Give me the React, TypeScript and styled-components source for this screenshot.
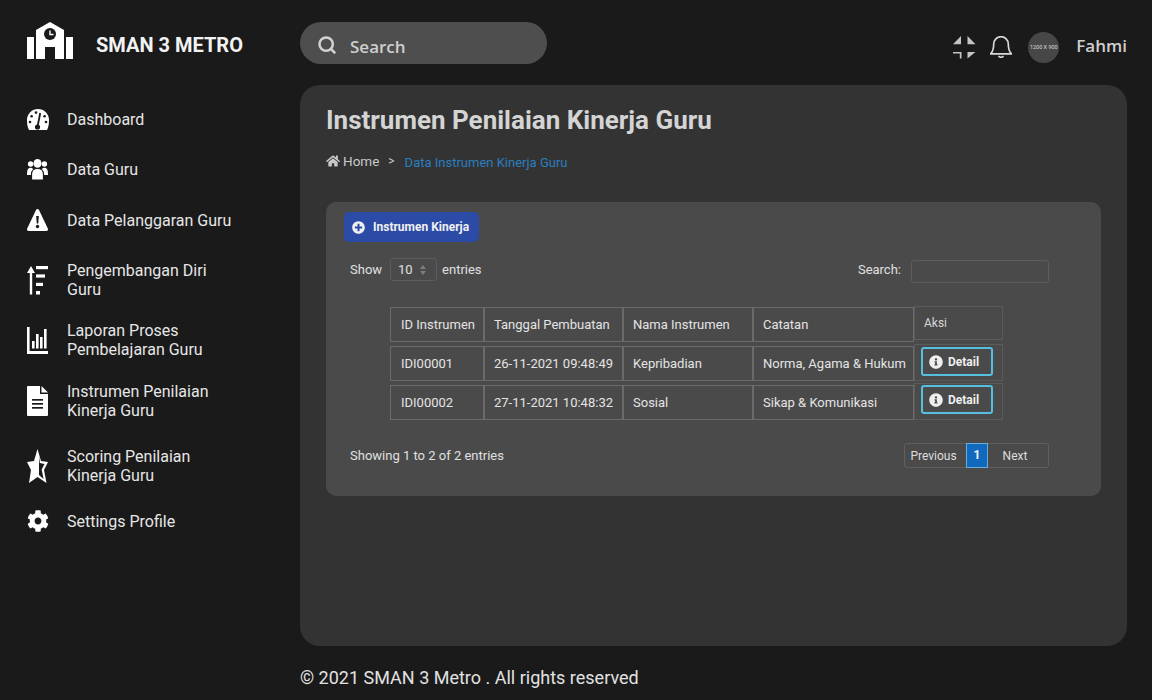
import React from "react";
import styled, { createGlobalStyle } from "styled-components";
import { FaCog, FaHome, FaPlusCircle, FaInfoCircle } from "react-icons/fa";
import { Search as SearchIcon } from "lucide-react";

const Global = createGlobalStyle`
  html, body { margin: 0; padding: 0; background: #1a1a1a; }
  body { font-family: Roboto, "Liberation Sans", sans-serif; }
  * { box-sizing: border-box; }
`;

const Page = styled.div`
  display: flex; width: 1152px; height: 700px; overflow: hidden; background: #1a1a1a;
`;
const Sidebar = styled.aside`
  width: 300px; flex: none; padding: 22px 0 0 27px;
`;
const Brand = styled.div`
  display: flex; align-items: center; gap: 23px; height: 37px; margin-bottom: 35px;
`;
const BrandName = styled.div`
  font-size: 20px; font-weight: 700; color: #f2f2f2; margin-top: 8px;
`;
const Nav = styled.nav`
  display: flex; flex-direction: column;
`;
const NavItem = styled.div<{ $h: number }>`
  display: flex; align-items: center; height: ${p => p.$h}px; color: #e6e6e6;
  font-size: 16px; line-height: 19px;
`;
const NavIcon = styled.span`
  width: 40px; flex: none; display: flex; align-items: center; color: #fff;
`;
const Main = styled.div`
  flex: 1; display: flex; flex-direction: column; padding-right: 25px;
`;
const Header = styled.header`
  height: 85px; display: flex; align-items: flex-start; justify-content: space-between; padding-top: 22px;
`;
const SearchBox = styled.div`
  width: 247px; height: 42px; border-radius: 21px; background: #4e4e4e; display: flex; align-items: center;
  padding: 4px 0 0 17px; gap: 13px; color: #d2d2d2;
`;
const SearchLabel = styled.span`
  font-family: "Open Sans", sans-serif; font-weight: 600; font-size: 17px; position: relative; top: 1px; color: #cfcfcf;
`;
const HeaderRight = styled.div`
  display: flex; align-items: center; height: 46px; color: #d9d9d9;
`;
const HeaderGlyph = styled.span`
  display: flex; margin-top: 4px; margin-left: 14px;
`;
const Avatar = styled.div`
  width: 31px; height: 31px; border-radius: 50%; background: #474747; color: #dcdcdc; margin: 4px 0 0 16px;
  font-size: 5.5px; display: flex; align-items: center; justify-content: center; white-space: nowrap;
`;
const UserName = styled.span`
  margin-left: 17px; font-family: "Open Sans", sans-serif; font-size: 17px; font-weight: 600; color: #cfcfcf;
`;
const ContentCard = styled.main`
  height: 561px; background: #333; border-radius: 20px; padding: 20px 26px 0;
`;
const Title = styled.h1`
  margin: 0; font-size: 26px; font-weight: 700; color: #d4d4d4; line-height: 30px;
`;
const Crumbs = styled.div`
  display: flex; align-items: center; margin-top: 16px; height: 20px; font-size: 13.5px; color: #c9c9c9;
`;
const CrumbHome = styled.span`
  margin-left: 3px;
`;
const CrumbSep = styled.span`
  margin: 0 10px 0 9px; font-size: 12px;
`;
const CrumbLink = styled.span`
  color: #2a7fc0; font-size: 13px; position: relative; top: 1px;
`;
const Panel = styled.section`
  margin-top: 31px; height: 294px; background: #4a4a4a; border-radius: 10px; padding: 10px 52px 0 18px;
  color: #e0e0e0; font-size: 13px;
`;
const AddButton = styled.button`
  display: flex; align-items: center; gap: 8px; height: 30px; width: 135px; padding: 0 8px; border: 0;
  border-radius: 5px; background: #2b4ba6; color: #f0f0f0; font: 700 12px Roboto, sans-serif;
`;
const Controls = styled.div`
  display: flex; justify-content: space-between; align-items: center; margin: 16px 0 0; height: 23px; padding-left: 6px;
`;
const Inline = styled.div`
  display: flex; align-items: center; gap: 7px;
`;
const SelectBox = styled.div`
  width: 47px; height: 23px; border: 1px solid #5c5c5c; border-radius: 3px; display: flex; align-items: center;
  justify-content: space-between; padding: 0 10px 0 7px; font-size: 13px; margin: 0 -2px 0 1px;
`;
const SearchInput = styled.div`
  width: 138px; height: 23px; border: 1px solid #5c5c5c; border-radius: 3px; margin: 4px 0 0 3px;
`;
const TableWrap = styled.div`
  display: flex; margin: 25px 0 0 46px; align-items: flex-start;
`;
const DataGrid = styled.div`
  display: grid; grid-template-columns: 94px 139px 130px 161px; grid-auto-rows: 35px; row-gap: 4px; margin-top: 1px;
`;
const Cell = styled.div`
  border: 1px solid #6b6b6b; padding: 0 5px 0 9px; display: flex; align-items: center; color: #e4e4e4; font-size: 13px; white-space: nowrap;
  &:nth-child(4n + 1) { padding-left: 10px; }
`;
const ActionColumn = styled.div`
  display: flex; flex-direction: column; width: 89px; color: #d6d6d6;
`;
const ActionCell = styled.div<{ $h: number; $mt: number; $pt: number }>`
  height: ${p => p.$h}px; margin-top: ${p => p.$mt}px; border: 1px solid #5b5b5b; padding: ${p => p.$pt}px 0 0 6px;
  display: flex; align-items: flex-start; font-size: 12px;
`;
const AksiLabel = styled.span`
  padding: 9px 0 0 3px;
`;
const DetailButton = styled.div`
  width: 72px; height: 29px; border: 2px solid #56bfe0; border-radius: 3px; display: flex; align-items: center;
  padding-left: 6px; gap: 5px; color: #efefef; font-size: 12px; font-weight: 700;
`;
const Foot = styled.div`
  display: flex; justify-content: space-between; align-items: center; margin-top: 23px; padding-left: 6px; height: 25px;
`;
const Pager = styled.div`
  display: flex; height: 25px; border: 1px solid #5f5f5f; border-radius: 3px; font-size: 12px;
`;
const PageBtn = styled.div<{ $w: number; $pr: number }>`
  width: ${p => p.$w}px; padding-right: ${p => p.$pr}px; display: flex; align-items: center; justify-content: center; color: #dedede;
`;
const PageCurrent = styled.div`
  width: 22px; margin: -1px 0; background: #1169bd; border: 1px solid #6aaedb; color: #f4f4f4; font-weight: 700;
  display: flex; align-items: center; justify-content: center; padding-bottom: 2px;
`;
const Footer = styled.footer`
  margin-top: 21px; font-size: 18px; color: #e2e2e2; line-height: 22px;
`;

const DARK = "#1a1a1a";

const SchoolIcon = () => (
  <svg width="46" height="37" viewBox="0 0 46 37" fill="#fff">
    <path d="M23 0 L37 8 V37 H28 V25 H18 V37 H9 V8 Z" />
    <circle cx="23" cy="12" r="6" fill={DARK} />
    <path d="M23 8.5 V12.5 H26.5" stroke="#fff" strokeWidth="1.4" fill="none" />
    <rect x="0" y="15" width="7" height="22" />
    <rect x="39" y="15" width="7" height="22" />
  </svg>
);
const DashboardIcon = () => (
  <svg width="22" height="21" viewBox="0 0 22 21" fill="#fff">
    <path d="M11 0 A11 11 0 0 1 22 11 C22 15 21.5 18 20 21 H2 C0.5 18 0 15 0 11 A11 11 0 0 1 11 0 Z" />
    <g fill={DARK}>
      <circle cx="9" cy="3.6" r="1.3" />
      <circle cx="4.6" cy="7.2" r="1.3" />
      <circle cx="3" cy="13" r="1.3" />
      <circle cx="17.6" cy="7.2" r="1.3" />
      <circle cx="19" cy="13" r="1.3" />
    </g>
    <path d="M10.5 18 L13.2 4" stroke={DARK} strokeWidth="1.8" />
    <circle cx="10.5" cy="18" r="2.6" fill={DARK} />
  </svg>
);
const UsersIcon = () => (
  <svg width="21" height="21" viewBox="0 0 21 21" fill="#fff">
    <circle cx="3.6" cy="5" r="2.7" />
    <circle cx="17.4" cy="5" r="2.7" />
    <path d="M0 14.5 Q0 8.8 3.6 8.8 Q7 8.8 7 14.5 V16 H0 Z" />
    <path d="M14 14.5 Q14 8.8 17.4 8.8 Q21 8.8 21 14.5 V16 H14 Z" />
    <ellipse cx="10.5" cy="4.4" rx="4" ry="4.4" />
    <path d="M4.5 21 V15.5 Q4.5 9.5 10.5 9.5 Q16.5 9.5 16.5 15.5 V21 Z" stroke={DARK} strokeWidth="1.2" />
  </svg>
);
const WarningIcon = () => (
  <svg width="21" height="22" viewBox="0 0 21 22" fill="#fff">
    <path d="M10.5 0 Q11.5 0 12 1 L20.8 19.5 Q21.5 22 19 22 H2 Q-0.5 22 0.2 19.5 L9 1 Q9.5 0 10.5 0 Z" />
    <path d="M9.2 7 H11.8 L11.3 14.5 H9.7 Z" fill={DARK} />
    <circle cx="10.5" cy="17.5" r="1.7" fill={DARK} />
  </svg>
);
const SortIcon = () => (
  <svg width="21" height="29" viewBox="0 0 21 29" fill="#fff">
    <path d="M4 0 L8 7 H5.2 V28.5 H2.8 V7 H0 Z" />
    <rect x="9" y="0" width="12" height="3.2" />
    <rect x="9" y="8.4" width="9" height="3.2" />
    <rect x="9" y="16.8" width="7" height="3.2" />
    <rect x="9" y="25" width="4" height="3.5" />
  </svg>
);
const ChartIcon = () => (
  <svg width="21" height="27" viewBox="0 0 21 27" fill="#fff">
    <path d="M0 0 H2.6 V24 H21 V27 H0 Z" />
    <rect x="5" y="14" width="2.6" height="7.5" />
    <rect x="9" y="7" width="2.6" height="14.5" />
    <rect x="13" y="10" width="2.6" height="11.5" />
    <rect x="17" y="2" width="2.6" height="19.5" />
  </svg>
);
const FileIcon = () => (
  <svg width="21" height="30" viewBox="0 0 21 30" fill="#fff">
    <path d="M0 1 Q0 0 1 0 H13 V8 H21 V29 Q21 30 20 30 H1 Q0 30 0 29 Z" />
    <path d="M14.5 0 L21 6.5 H14.5 Z" />
    <g fill={DARK}>
      <rect x="5" y="13" width="11" height="1.7" />
      <rect x="5" y="17" width="11" height="1.7" />
      <rect x="5" y="21" width="11" height="1.7" />
    </g>
  </svg>
);
const StarIcon = () => (
  <svg width="21" height="34" viewBox="0 0 21 34" fill="#fff">
    <path fillRule="evenodd" d="M10.5 0 L14 12 L21 13 L17 21 L19.5 34 L10.5 28 L2 34 L4 21 L0 13 L7 12 Z M12 7 L12 26 L16.5 30 L14.7 20.5 L17.5 15 L12.8 14 Z" />
  </svg>
);
const CompressIcon = () => (
  <svg width="23" height="23" viewBox="0 0 23 23" fill="#c4c4c4">
    <path d="M8 0 V8.2 H0 Z" />
    <path d="M14.5 0 V8.2 H22.5 Z" />
    <path d="M0 16 H8.5 V22.5 H6.8 V17.6 H0 Z" />
    <path d="M14.5 16 H22.5 L14.5 22.5 Z" />
  </svg>
);
const BellIcon = () => (
  <svg width="22" height="22" viewBox="0 0 22 22" fill="none" stroke="#d9d9d9" strokeWidth="1.7">
    <path d="M0.5 17.8 H21.5 C19.5 16 18.3 14.5 18.3 8 A7.3 7.3 0 0 0 3.7 8 C3.7 14.5 2.5 16 0.5 17.8 Z" />
    <path d="M8.5 20 Q11 22.6 13.5 20" />
  </svg>
);
const SortCaret = () => (
  <svg width="6" height="10" viewBox="0 0 6 10" fill="#7d7d7d">
    <path d="M3 0 L6 4 H0 Z M3 10 L0 6 H6 Z" />
  </svg>
);

const navItems: { h: number; icon: React.ReactNode; lines: string[] }[] = [
  { h: 50, icon: <DashboardIcon />, lines: ["Dashboard"] },
  { h: 50, icon: <UsersIcon />, lines: ["Data Guru"] },
  { h: 52, icon: <WarningIcon />, lines: ["Data Pelanggaran Guru"] },
  { h: 68, icon: <SortIcon />, lines: ["Pengembangan Diri", "Guru"] },
  { h: 52, icon: <ChartIcon />, lines: ["Laporan Proses", "Pembelajaran Guru"] },
  { h: 70, icon: <FileIcon />, lines: ["Instrumen Penilaian", "Kinerja Guru"] },
  { h: 60, icon: <StarIcon />, lines: ["Scoring Penilaian", "Kinerja Guru"] },
  { h: 50, icon: <FaCog size={22} />, lines: ["Settings Profile"] },
];

const rows = [
  ["IDI00001", "26-11-2021 09:48:49", "Kepribadian", "Norma, Agama & Hukum"],
  ["IDI00002", "27-11-2021 10:48:32", "Sosial", "Sikap & Komunikasi"],
];

export default function App() {
  return (
    <Page>
      <Global />
      <Sidebar>
        <Brand>
          <SchoolIcon />
          <BrandName>SMAN 3 METRO</BrandName>
        </Brand>
        <Nav>
          {navItems.map(item => (
            <NavItem key={item.lines[0]} $h={item.h}>
              <NavIcon>{item.icon}</NavIcon>
              <div>{item.lines.map(l => <div key={l}>{l}</div>)}</div>
            </NavItem>
          ))}
        </Nav>
      </Sidebar>
      <Main>
        <Header>
          <SearchBox>
            <SearchIcon size={20} strokeWidth={3} />
            <SearchLabel>Search</SearchLabel>
          </SearchBox>
          <HeaderRight>
            <HeaderGlyph><CompressIcon /></HeaderGlyph>
            <HeaderGlyph><BellIcon /></HeaderGlyph>
            <Avatar>1200 X 900</Avatar>
            <UserName>Fahmi</UserName>
          </HeaderRight>
        </Header>
        <ContentCard>
          <Title>Instrumen Penilaian Kinerja Guru</Title>
          <Crumbs>
            <FaHome size={14} />
            <CrumbHome>Home</CrumbHome>
            <CrumbSep>&gt;</CrumbSep>
            <CrumbLink>Data Instrumen Kinerja Guru</CrumbLink>
          </Crumbs>
          <Panel>
            <AddButton><FaPlusCircle size={13} />Instrumen Kinerja</AddButton>
            <Controls>
              <Inline>Show <SelectBox>10 <SortCaret /></SelectBox> entries</Inline>
              <Inline>Search: <SearchInput /></Inline>
            </Controls>
            <TableWrap>
              <DataGrid>
                {["ID Instrumen", "Tanggal Pembuatan", "Nama Instrumen", "Catatan"].map(h => <Cell key={h}>{h}</Cell>)}
                {rows.flat().map((c, i) => <Cell key={i}>{c}</Cell>)}
              </DataGrid>
              <ActionColumn>
                <ActionCell $h={34} $mt={0} $pt={0}><AksiLabel>Aksi</AksiLabel></ActionCell>
                <ActionCell $h={37} $mt={4} $pt={2}><DetailButton><FaInfoCircle size={14} />Detail</DetailButton></ActionCell>
                <ActionCell $h={37} $mt={2} $pt={1}><DetailButton><FaInfoCircle size={14} />Detail</DetailButton></ActionCell>
              </ActionColumn>
            </TableWrap>
            <Foot>
              <span>Showing 1 to 2 of 2 entries</span>
              <Pager>
                <PageBtn $w={61} $pr={4}>Previous</PageBtn>
                <PageCurrent>1</PageCurrent>
                <PageBtn $w={60} $pr={6}>Next</PageBtn>
              </Pager>
            </Foot>
          </Panel>
        </ContentCard>
        <Footer>© 2021 SMAN 3 Metro . All rights reserved</Footer>
      </Main>
    </Page>
  );
}
